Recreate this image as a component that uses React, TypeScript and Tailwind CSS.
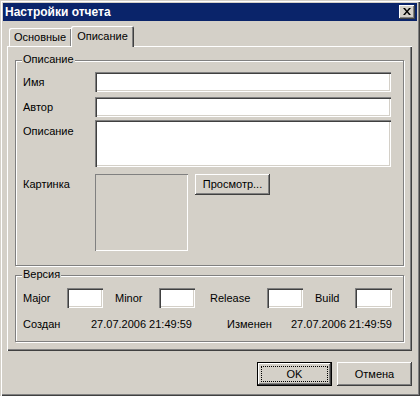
import React from "react";

const raised =
  "shadow-[inset_-1px_-1px_0_#404040,inset_1px_1px_0_#ffffff,inset_-2px_-2px_0_#808080,inset_2px_2px_0_#d4d0c8]";
const sunken =
  "bg-white shadow-[inset_1px_1px_0_#808080,inset_2px_2px_0_#404040,inset_-1px_-1px_0_#ffffff,inset_-2px_-2px_0_#d4d0c8]";

function Field({ className = "" }: { className?: string }) {
  return <div className={`${sunken} ${className}`} />;
}

function GroupBox({ title, className = "", children }: { title: string; className?: string; children: React.ReactNode }) {
  return (
    <div className={`relative border border-[#808080] shadow-[inset_1px_1px_0_#ffffff,1px_1px_0_#ffffff] ${className}`}>
      <span className="absolute left-[6px] top-[-8px] bg-[#d4d0c8] px-[1px] leading-[13px]">{title}</span>
      {children}
    </div>
  );
}

export default function App() {
  return (
    <div
      className={`w-[420px] h-[396px] bg-[#d4d0c8] p-[3px] text-[11px] text-black shadow-[inset_1px_1px_0_#d4d0c8,inset_2px_2px_0_#ffffff,inset_-1px_-1px_0_#404040,inset_-2px_-2px_0_#808080]`}
      style={{ fontFamily: '"Liberation Sans", Arial, sans-serif' }}
    >
      {/* title bar */}
      <div className="h-[18px] bg-[#0a246a] flex items-center justify-between pl-[2px] pr-[2px]">
        <span className="text-white font-bold text-[12px] leading-[14px]">Настройки отчета</span>
        <div className={`w-[16px] h-[14px] bg-[#d4d0c8] flex items-center justify-center ${raised}`}>
          <svg width="8" height="7" viewBox="0 0 8 7" className="-mt-[1px]">
            <path d="M0 0h2l2 2.5L6 0h2L5 3.5 8 7H6L4 4.5 2 7H0l3-3.5z" fill="#000" />
          </svg>
        </div>
      </div>

      {/* tabs */}
      <div className="mt-[5px] ml-[4px] h-[20px] flex items-end">
        <div className="ml-[2px] w-[62px] h-[18px] rounded-tl-[2px] flex items-center justify-center shadow-[inset_1px_1px_0_#ffffff,inset_-1px_0_0_#808080] leading-[13px]">
          Основные
        </div>
        <div className="relative z-10 -mb-[1px] w-[63px] h-[21px] bg-[#d4d0c8] rounded-t-[2px] flex items-start justify-center pt-[4px] shadow-[inset_1px_1px_0_#ffffff,inset_-1px_0_0_#404040,inset_-2px_0_0_#808080] leading-[13px]">
          Описание
        </div>
      </div>

      {/* tab panel */}
      <div className="ml-[4px] w-[405px] h-[305px] px-[8px] pt-[14px] shadow-[inset_1px_1px_0_#ffffff,inset_-1px_-1px_0_#404040,inset_-2px_-2px_0_#808080]">
        <GroupBox title="Описание" className="h-[206px] pl-[7px] pt-[11px]">
          <div className="flex items-center h-[20px]">
            <span className="w-[72px]">Имя</span>
            <Field className="w-[296px] h-[20px]" />
          </div>
          <div className="flex items-center h-[20px] mt-[5px]">
            <span className="w-[72px]">Автор</span>
            <Field className="w-[296px] h-[20px]" />
          </div>
          <div className="flex items-start mt-[3px]">
            <span className="w-[72px] pt-[3px]">Описание</span>
            <Field className="w-[296px] h-[47px]" />
          </div>
          <div className="flex items-start mt-[7px]">
            <span className="w-[72px] pt-[2px]">Картинка</span>
            <div className="w-[93px] h-[77px] shadow-[inset_1px_1px_0_#808080,inset_-1px_-1px_0_#ffffff]" />
            <div className={`ml-[7px] w-[75px] h-[21px] flex items-center justify-center ${raised}`}>Просмотр...</div>
          </div>
        </GroupBox>

        <GroupBox title="Версия" className="mt-[9px] h-[67px] pl-[7px] pt-[12px]">
          <div className="flex items-center h-[20px]">
            <span className="w-[44px]">Major</span>
            <Field className="w-[36px] h-[20px]" />
            <span className="ml-[12px] w-[44px]">Minor</span>
            <Field className="w-[36px] h-[20px]" />
            <span className="ml-[15px] w-[57px]">Release</span>
            <Field className="w-[36px] h-[20px]" />
            <span className="ml-[12px] w-[40px]">Build</span>
            <Field className="w-[37px] h-[20px]" />
          </div>
          <div className="flex items-center mt-[10px] leading-[13px]">
            <span className="w-[68px]">Создан</span>
            <span className="w-[136px]">27.07.2006 21:49:59</span>
            <span className="w-[64px]">Изменен</span>
            <span>27.07.2006 21:49:59</span>
          </div>
        </GroupBox>
      </div>

      {/* buttons */}
      <div className="mt-[11px] pr-[5px] flex justify-end gap-[5px]">
        <div className="w-[75px] h-[24px] border border-black">
          <div className={`w-full h-full p-[3px] ${raised}`}>
            <div className="w-full h-full border border-dotted border-black flex items-center justify-center">OK</div>
          </div>
        </div>
        <div className={`w-[75px] h-[24px] flex items-center justify-center ${raised}`}>Отмена</div>
      </div>
    </div>
  );
}
